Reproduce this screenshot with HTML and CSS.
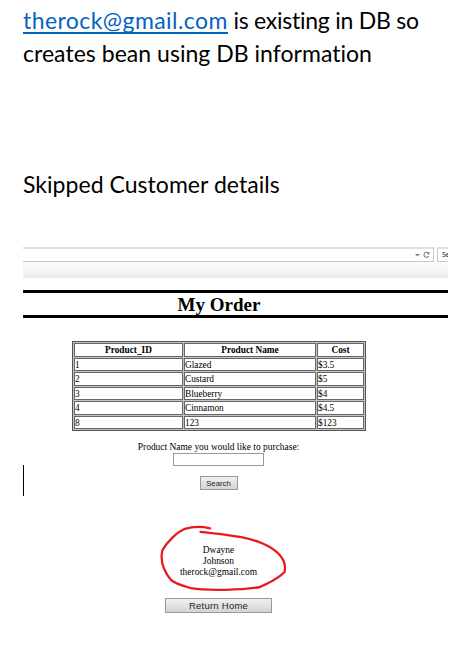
FILE: index.html
```html
<!DOCTYPE html>
<html lang="en">
<head>
<meta charset="utf-8">
<title>My Order</title>
<link rel="stylesheet" href="styles.css">
</head>
<body>
<main class="doc">
  <p class="note intro"><a class="mail" href="#">therock@gmail.com</a><span class="line-a"> is existing in DB so</span><br><span class="line-b">creates bean using DB information</span></p>
  <p class="note skipped">Skipped Customer details</p>
  <section class="capture">
    <div class="toolbar">
      <div class="address">
        <svg class="bar-icons" width="18" height="10" viewBox="0 0 18 10"><path d="M1 4h5L3.500 6.500z" fill="#808080"/><path d="M14.200 2.900A2.500 2.500 0 1 0 14.700 6" fill="none" stroke="#808080" stroke-width="1.100"/><path d="M12.500 4.300h3V1.500z" fill="#808080"/></svg>
      </div>
      <div class="search-box">Se</div>
    </div>
    <div class="tabstrip"></div>
    <h1 class="title"><span>My Order</span></h1>
    <div class="content">
      <table class="products">
        <colgroup><col class="c-id"><col class="c-name"><col class="c-cost"></colgroup>
        <tr><th>Product_ID</th><th>Product Name</th><th>Cost</th></tr>
        <tr><td>1</td><td>Glazed</td><td>$3.5</td></tr>
        <tr><td>2</td><td>Custard</td><td>$5</td></tr>
        <tr><td>3</td><td>Blueberry</td><td>$4</td></tr>
        <tr><td>4</td><td>Cinnamon</td><td>$4.5</td></tr>
        <tr><td>8</td><td>123</td><td>$123</td></tr>
      </table>
      <label class="prompt" for="name">Product Name you would like to purchase:</label>
      <input class="field" id="name" type="text">
      <button class="btn search">Search</button>
      <div class="customer">
        <div>Dwayne</div><div>Johnson</div><div class="cust-mail">therock@gmail.com</div>
        <svg class="ring" width="140" height="74" viewBox="155 520 140 74"><path d="M210 528.300C202 526.500 192 526.800 185 528.800C177 532 167 542 162.500 550C160 560 162 569 171 580C176 584 184 586 191 588.200C208 591 243 590 260 587C268 583 277 580 284.500 572C287 561 281 553 267 545.500C248 536 228 535 200.500 531.800" fill="none" stroke="#e71b1e" stroke-width="2.300" stroke-linecap="round" stroke-linejoin="round"/></svg>
      </div>
      <button class="btn home">Return Home</button>
    </div>
    <i class="caret"></i>
  </section>
</main>
</body>
</html>
```
FILE: styles.css
```css
* { box-sizing: border-box; }
body { margin: 0; background: #fff; color: #000; overflow: hidden; }
.doc { width: 469px; height: 668px; padding: 4px 0 0 23px; }
.note { margin: 0; font: 23px/33px Lato, sans-serif; font-variant-ligatures: none; white-space: nowrap; }
.mail { color: #0563c1; text-decoration: none; display: inline-block; height: 30px; border-bottom: 2px solid #0563c1; vertical-align: top; letter-spacing: 0.43px; }
.line-a { letter-spacing: -0.25px; }
.line-b { letter-spacing: 0.03px; }
.skipped { margin-top: 98px; letter-spacing: 0.04px; }
.capture { position: relative; width: 425px; margin-top: 46px; font: 9.3px/11px "Liberation Serif", serif; }
.toolbar { display: flex; gap: 3px; height: 15px; overflow: hidden; }
.address { width: 411px; flex: none; border: 1px solid #c8c8c8; border-top: 2px solid #e0e0e0; border-left: 0; display: flex; justify-content: flex-end; align-items: center; padding-right: 1px; }
.search-box { width: 30px; flex: none; border: 1px solid #c8c8c8; border-top: 2px solid #e0e0e0; padding-left: 4px; font: 7px/12px "Open Sans", sans-serif; }
.tabstrip { height: 16px; background: linear-gradient(#fdfdfd, #ebebeb); }
.title { height: 28px; margin: 12px 0 0; border-top: 3px solid #000; border-bottom: 3px solid #000; font: bold 19px/24px "Liberation Serif", serif; padding-left: 154.500px; }
.content { width: 391px; display: flex; flex-direction: column; align-items: center; padding-top: 23px; }
.products { width: 294px; height: 90px; margin-left: 1px; table-layout: fixed; border: 1.500px solid #555; border-spacing: 1px; background: #c4c4c4; }
.products th, .products td { border: 1px solid #666; background: #fff; padding: 1px 0 0; height: 13px; line-height: 10px; }
.products td { text-align: left; }
.c-id { width: 109px; }
.c-name { width: 132px; }
.prompt { margin-top: 11px; font-size: 9.450px; white-space: nowrap; }
.field { width: 91px; height: 13px; border: 1px solid #999; padding: 0; background: #fff; }
.btn { padding: 0; border: 1px solid #999; background: linear-gradient(#f0f0f0, #d4d4d4); color: #222; font-family: "Liberation Sans", sans-serif; }
.search { width: 38px; height: 14px; margin-top: 10px; font-size: 7.800px; line-height: 11px; }
.customer { position: relative; margin-top: 55px; text-align: center; font-size: 9.450px; line-height: 11px; }
.ring { position: absolute; left: 50%; top: -25px; margin-left: -64px; }
.home { width: 107px; height: 15px; margin-top: 20px; font-size: 9.500px; line-height: 13px; letter-spacing: 0.25px; }
.caret { position: absolute; left: 0; top: 218px; width: 1px; height: 31px; background: #000; }
```
